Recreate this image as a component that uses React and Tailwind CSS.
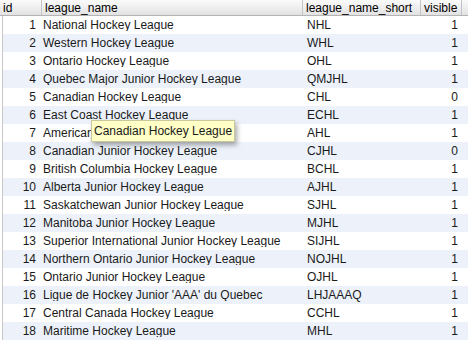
const rows = [
  [1, 'National Hockey League', 'NHL', 1],
  [2, 'Western Hockey League', 'WHL', 1],
  [3, 'Ontario Hockey League', 'OHL', 1],
  [4, 'Quebec Major Junior Hockey League', 'QMJHL', 1],
  [5, 'Canadian Hockey League', 'CHL', 0],
  [6, 'East Coast Hockey League', 'ECHL', 1],
  [7, 'American Hockey League', 'AHL', 1],
  [8, 'Canadian Junior Hockey League', 'CJHL', 0],
  [9, 'British Columbia Hockey League', 'BCHL', 1],
  [10, 'Alberta Junior Hockey League', 'AJHL', 1],
  [11, 'Saskatchewan Junior Hockey League', 'SJHL', 1],
  [12, 'Manitoba Junior Hockey League', 'MJHL', 1],
  [13, 'Superior International Junior Hockey League', 'SIJHL', 1],
  [14, 'Northern Ontario Junior Hockey League', 'NOJHL', 1],
  [15, 'Ontario Junior Hockey League', 'OJHL', 1],
  [16, "Ligue de Hockey Junior 'AAA' du Quebec", 'LHJAAAQ', 1],
  [17, 'Central Canada Hockey League', 'CCHL', 1],
  [18, 'Maritime Hockey League', 'MHL', 1],
]

function HeaderCell({ label, className }) {
  return (
    <div className={`flex h-full shrink-0 items-center border-r border-[#c4c4c4] pl-[3px] ${className}`}>
      {label}
    </div>
  )
}

export default function App() {
  return (
    <div className="relative h-[348px] w-[468px] overflow-hidden bg-white font-['Liberation_Sans',Arial,sans-serif] text-[12px] leading-none text-[#1a1a1a]">
      <div className="flex h-[16px] border-b border-[#b4b4b4] bg-gradient-to-b from-[#fbfbfb] to-[#e2e2e2] text-black">
        <HeaderCell label="id" className="w-[42px]" />
        <HeaderCell label="league_name" className="w-[261px]" />
        <HeaderCell label="league_name_short" className="w-[118px]" />
        <HeaderCell label="visible" className="w-[41px]" />
        <div className="flex-1" />
      </div>
      <div className="ml-[2px] border-l border-[#c8c8c8]">
        {rows.map(([id, name, short, visible], i) => (
          <div
            key={id}
            className={`flex h-[18px] items-center ${i % 2 === 1 ? 'bg-[#edf2fa]' : 'bg-white'}`}
          >
            <div className="w-[35px] shrink-0 pr-[2px] text-right">{id}</div>
            <div className="w-[266px] shrink-0 truncate pl-[5px]">{name}</div>
            <div className="w-[118px] shrink-0 pl-[3px]">{short}</div>
            <div className="w-[36px] shrink-0 text-right">{visible}</div>
          </div>
        ))}
      </div>
      <div className="absolute left-[91px] top-[120px] border border-[#c9c9a0] bg-[#ffffc6] px-[2px] py-[4px] shadow-[2px_3px_5px_rgba(0,0,0,0.35)]">
        Canadian Hockey League
      </div>
    </div>
  )
}
